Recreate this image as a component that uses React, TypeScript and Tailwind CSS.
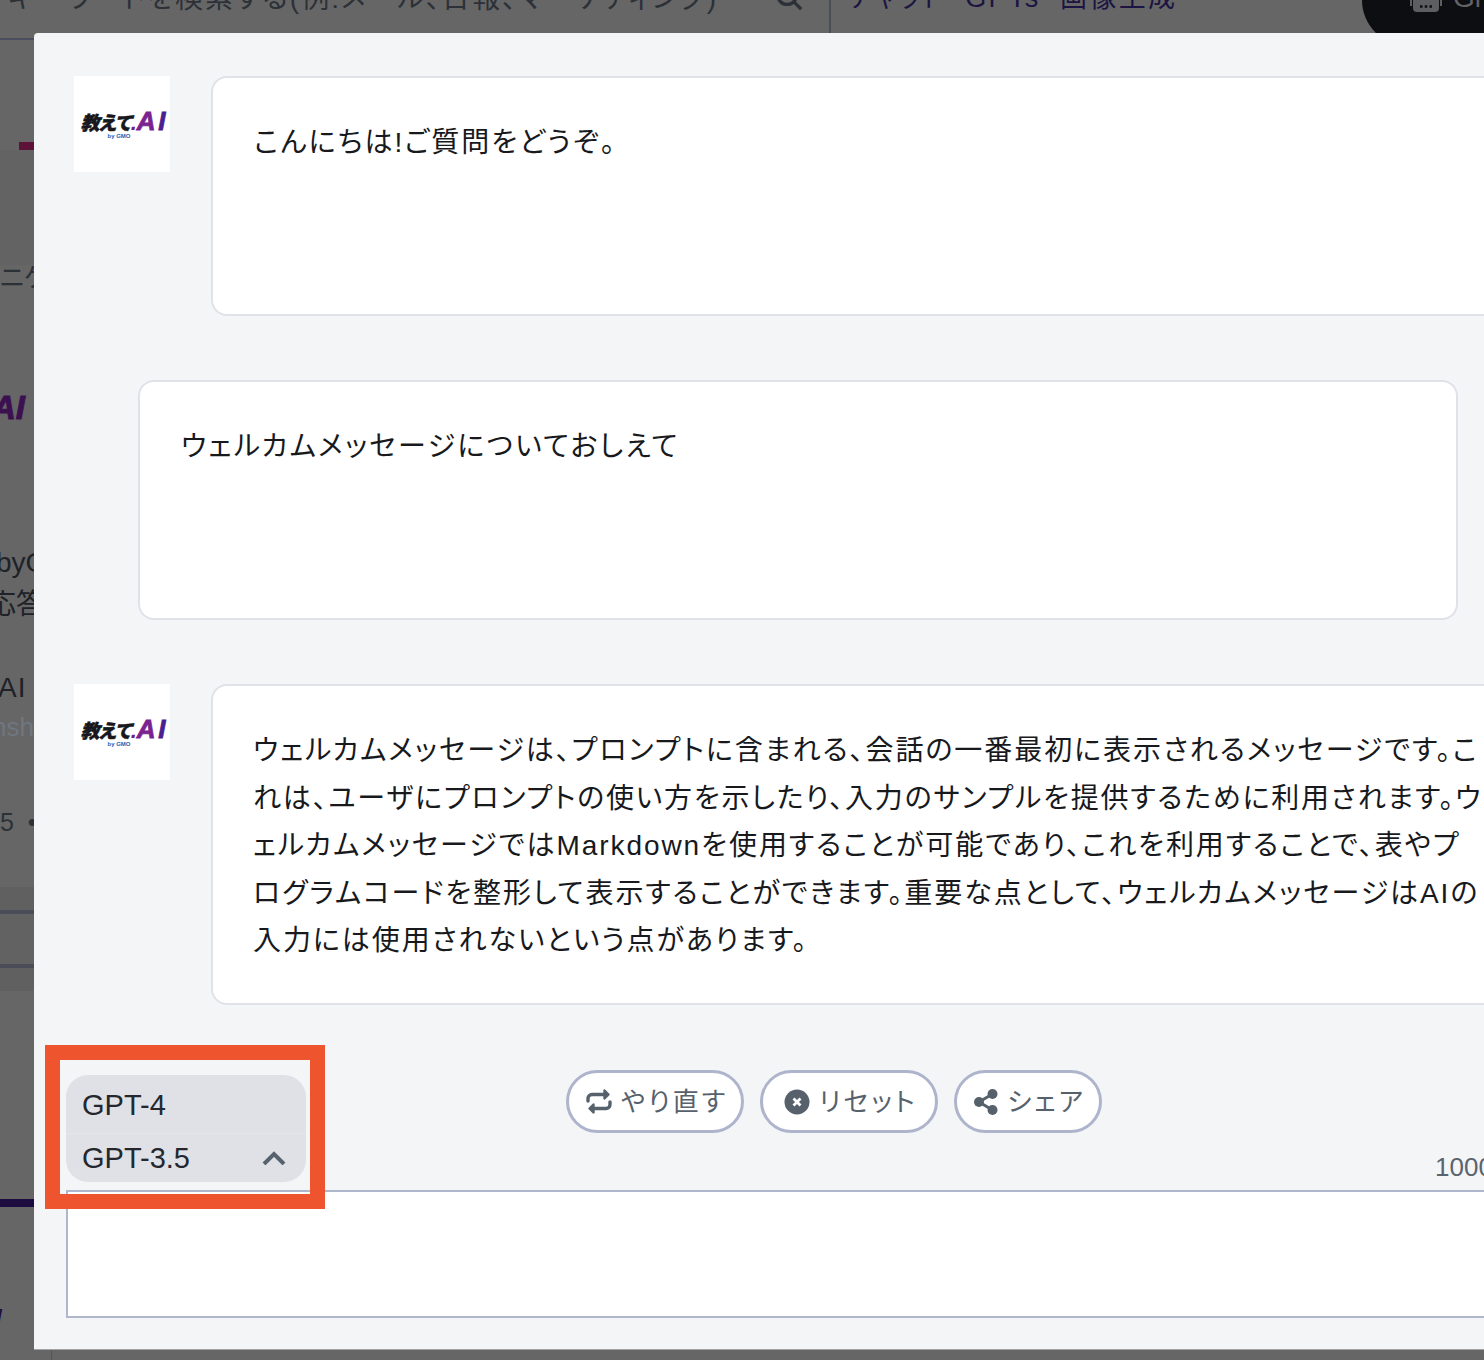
import React from "react";

const jp = "font-['Liberation_Sans','Noto_Sans_CJK_JP',sans-serif] [font-feature-settings:'palt']";

function Logo() {
  return (
    <div className="flex h-24 w-24 flex-none flex-col items-center justify-center bg-white pb-[1px] pl-[2px]">
      <div className="flex items-baseline leading-none italic">
        <span className="text-[19px] font-black tracking-[-0.5px] text-[#17171c] [-webkit-text-stroke:0.5px_#17171c] font-['Noto_Sans_CJK_JP',sans-serif]">教えて</span>
        <span className="text-[22px] font-black text-[#6a1f8c] font-['Liberation_Sans',sans-serif]">.</span>
        <span className="pr-[1px] text-[26px] font-bold tracking-[1.5px] text-[#7a2390] [-webkit-text-stroke:0.8px_#7a2390] font-['Liberation_Sans',sans-serif]">A</span>
        <span className="text-[26px] font-bold text-[#4a2090] [-webkit-text-stroke:0.8px_#4a2090] font-['Liberation_Sans',sans-serif]">I</span>
      </div>
      <div className="-ml-[8px] -mt-[1px] text-[6px] leading-none font-bold text-[#2a5cb0] font-['Liberation_Sans',sans-serif]">by GMO</div>
    </div>
  );
}

function Retry() {
  return (
    <svg viewBox="0 0 26 27" className="h-[27px] w-[26px]" fill="none" stroke="#56616b" strokeWidth="3.4" strokeLinecap="round" strokeLinejoin="round">
      <path d="M2 13V10.500a4 4 0 0 1 4-4H19" />
      <path d="M24 14v2.500a4 4 0 0 1-4 4H8" />
      <path d="M18.500 2.500 22.500 6.500l-4 4z" fill="#56616b" strokeWidth="2.400" />
      <path d="M7.500 16.500 3.500 20.500l4 4z" fill="#56616b" strokeWidth="2.400" />
    </svg>
  );
}

function XCircle() {
  return (
    <svg viewBox="0 0 26 26" className="h-[26px] w-[26px]">
      <circle cx="13" cy="13" r="12.500" fill="#56616b" />
      <path d="M9.500 9.500l7 7M16.500 9.500l-7 7" stroke="#fff" strokeWidth="2.800" />
    </svg>
  );
}

function Share() {
  return (
    <svg viewBox="0 0 24 26" className="h-[26px] w-[24px]" fill="#56616b">
      <circle cx="5" cy="13" r="5" />
      <circle cx="18.500" cy="5" r="5" />
      <circle cx="18.500" cy="21" r="5" />
      <path d="M5 13 18.500 5M5 13l13.500 8" stroke="#56616b" strokeWidth="3" />
    </svg>
  );
}

function Bot() {
  return (
    <svg viewBox="0 0 32 28" className="h-[28px] w-[32px] flex-none">
      <rect x="3" y="0" width="26" height="26" rx="4" fill="#5c5e62" />
      <path d="M1 12v8M31 12v8" stroke="#5c5e62" strokeWidth="2" />
      <path d="M10 20.500h12" stroke="#0d0e12" strokeWidth="2.500" strokeDasharray="2.500 2.250" />
    </svg>
  );
}

function Pill({ w, icon, label }: { w: string; icon: React.ReactNode; label: string }) {
  return (
    <button className={`flex h-[63px] items-center justify-center gap-[9px] rounded-full border-[3px] border-[#adb4cc] bg-white pl-[4px] text-[26px] tracking-[3px] text-[#56616b] ${w} ${jp}`}>
      {icon}
      <span className="pt-[1px]">{label}</span>
    </button>
  );
}

function Bubble({ className, children }: { className: string; children: React.ReactNode }) {
  return (
    <div className={`rounded-[16px] border-2 border-[#e0e2ea] bg-white pl-[41px] pt-[41px] text-[28px] leading-[47.6px] text-[#17191d] ${jp} ${className}`}>
      {children}
    </div>
  );
}

export default function App() {
  return (
    <div className={`relative h-[1360px] w-[1484px] overflow-hidden bg-[#666666] ${jp}`}>
      {/* Page behind the modal */}
      <div className="flex h-[33px] items-start overflow-hidden">
        <div className="-mt-[20px] ml-[8px] w-[767px] flex-none whitespace-nowrap text-[28px] leading-[38px] tracking-[2.1px] text-[#2c3138]">
          キーワードを検索する(例:メール、日報、マーケティング)
        </div>
        <svg viewBox="0 0 30 30" className="-mt-[18px] h-[30px] w-[28px] flex-none" fill="none" stroke="#2c3138" strokeWidth="3.500">
          <circle cx="13" cy="13" r="10" />
          <path d="M20 20 28 28" />
        </svg>
        <div className="ml-[26px] h-[33px] w-[2px] flex-none bg-[#4a4e58]" />
        <div className="-mt-[21px] ml-[17px] w-[514px] flex-none whitespace-nowrap text-[27px] leading-[38px] tracking-[2.3px] text-[#1c1442]">
          チャット&nbsp; GPTs&nbsp; 画像生成
        </div>
        <div className="-mt-[46px] flex h-[92px] w-[160px] flex-none items-center gap-[11px] rounded-l-[46px] bg-[#0d0e12] pl-[48px] text-[28px] text-[#636363]">
          <Bot />
          <span className="-mt-[4px]">Gi</span>
        </div>
      </div>

      <div className="flex">
        {/* Left sliver of the page */}
        <div className="h-[1327px] w-[34px] flex-none overflow-hidden text-[#1e2228]">
          <div className="mt-[5px] h-[2px] bg-[#4a4e60]" />
          <div className="mt-[102px] ml-[19px] h-[8px] bg-[#5e1238]" />
          <div className="h-[115px] bg-[#636363]" />
          <div className="whitespace-nowrap text-[26px] leading-[26px] text-[#2c3138]">ニケ</div>
          <div className="-ml-[8px] mt-[97px] w-[60px] whitespace-nowrap text-[33px] leading-[40px] font-bold italic text-[#3c1050] [-webkit-text-stroke:1px_#3c1050] font-['Liberation_Sans',sans-serif]">
            AI
          </div>
          <div className="-ml-[4px] mt-[114px] whitespace-nowrap text-[28px] leading-[42px]">byG</div>
          <div className="-ml-[12px] whitespace-nowrap text-[28px] leading-[42px]">応答</div>
          <div className="-ml-[2px] mt-[41px] whitespace-nowrap text-[28px] leading-[42px] tracking-[1px]">AI I</div>
          <div className="-ml-[8px] -mt-[2px] whitespace-nowrap text-[26px] leading-[40px] text-[#6f7680]">nsh</div>
          <div className="mt-[62px] whitespace-nowrap text-[25px] leading-[26px] text-[#2c3138]">5 &nbsp;•</div>
          <div className="mt-[52px] h-[23px] bg-[#606060]" />
          <div className="h-[4px] bg-[#4a4c58]" />
          <div className="h-[50px] bg-[#626262]" />
          <div className="h-[4px] bg-[#4a4c58]" />
          <div className="h-[23px] bg-[#606060]" />
          <div className="mt-[208px] h-[8px] bg-[#1c0c40]" />
          <div className="mt-[94px] -ml-[4px] text-[21px] leading-[30px] font-bold italic text-[#22103e] font-['Liberation_Sans',sans-serif]">I</div>
        </div>

        {/* Modal */}
        <div className="h-[1317px] w-[1600px] flex-none rounded-t-[4px] border-b border-[#a4a4a4] bg-[#f4f5f7] pl-[32px] pt-[43px]">
          <div className="ml-[8px] flex gap-[41px]">
            <Logo />
            <Bubble className="h-[240px] w-[1400px]">
              <p className="tracking-[2.1px]">こんにちは!ご質問をどうぞ。</p>
            </Bubble>
          </div>

          <Bubble className="ml-[72px] mt-[64px] h-[240px] w-[1320px]">
            <p className="tracking-[2.3px]">ウェルカムメッセージについておしえて</p>
          </Bubble>

          <div className="ml-[8px] mt-[64px] flex gap-[41px]">
            <Logo />
            <Bubble className="h-[321px] w-[1400px]">
              <p className="-ml-[1px] whitespace-nowrap tracking-[1.95px]">
                ウェルカムメッセージは、プロンプトに含まれる、会話の一番最初に表示されるメッセージです。こ
                <br />
                <span className="tracking-[1.8px]">れは、ユーザにプロンプトの使い方を示したり、入力のサンプルを提供するために利用されます。ウ</span>
                <br />
                ェルカムメッセージではMarkdownを使用することが可能であり、これを利用することで、表やプ
                <br />
                ログラムコードを整形して表示することができます。重要な点として、ウェルカムメッセージはAIの
                <br />
                入力には使用されないという点があります。
              </p>
            </Bubble>
          </div>

          <div className="mt-[65px] flex h-[120px] items-start">
            <div className="mt-[5px] w-[240px] flex-none rounded-[22px] bg-[#dfe1e7] text-[29px] text-[#24282e] font-['Liberation_Sans',sans-serif]">
              <div className="flex h-[58px] items-center px-[16px] pt-[4px]">GPT-4</div>
              <div className="flex h-[49px] items-center justify-between border-t border-[#e4e6eb] pl-[16px] pr-[20px]">
                <span className="pt-[2px]">GPT-3.5</span>
                <svg viewBox="0 0 24 14" className="h-[14px] w-[24px]" fill="none" stroke="#56636e" strokeWidth="4">
                  <path d="M2 13 12 3l10 10" />
                </svg>
              </div>
            </div>
            <div className="ml-[260px] flex gap-[16px]">
              <Pill w="w-[178px]" icon={<Retry />} label="やり直す" />
              <Pill w="w-[178px]" icon={<XCircle />} label="リセット" />
              <Pill w="w-[148px]" icon={<Share />} label="シェア" />
            </div>
            <div className="ml-[333px] mt-[82px] whitespace-nowrap text-[26px] leading-[30px] text-[#5a646e]">1000文字</div>
          </div>

          <div className="h-[128px] w-[1536px] border-2 border-[#b0b6cc] bg-white" />
        </div>
      </div>

      {/* Annotation frame over the screenshot */}
      <div className="absolute left-[45px] top-[1045px] h-[164px] w-[280px] border-[15px] border-[#ee552e]" />
      {/* Divider of the page, showing below the modal */}
      <div className="absolute left-[51px] top-[1350px] h-[10px] w-px bg-[#555555]" />
    </div>
  );
}
